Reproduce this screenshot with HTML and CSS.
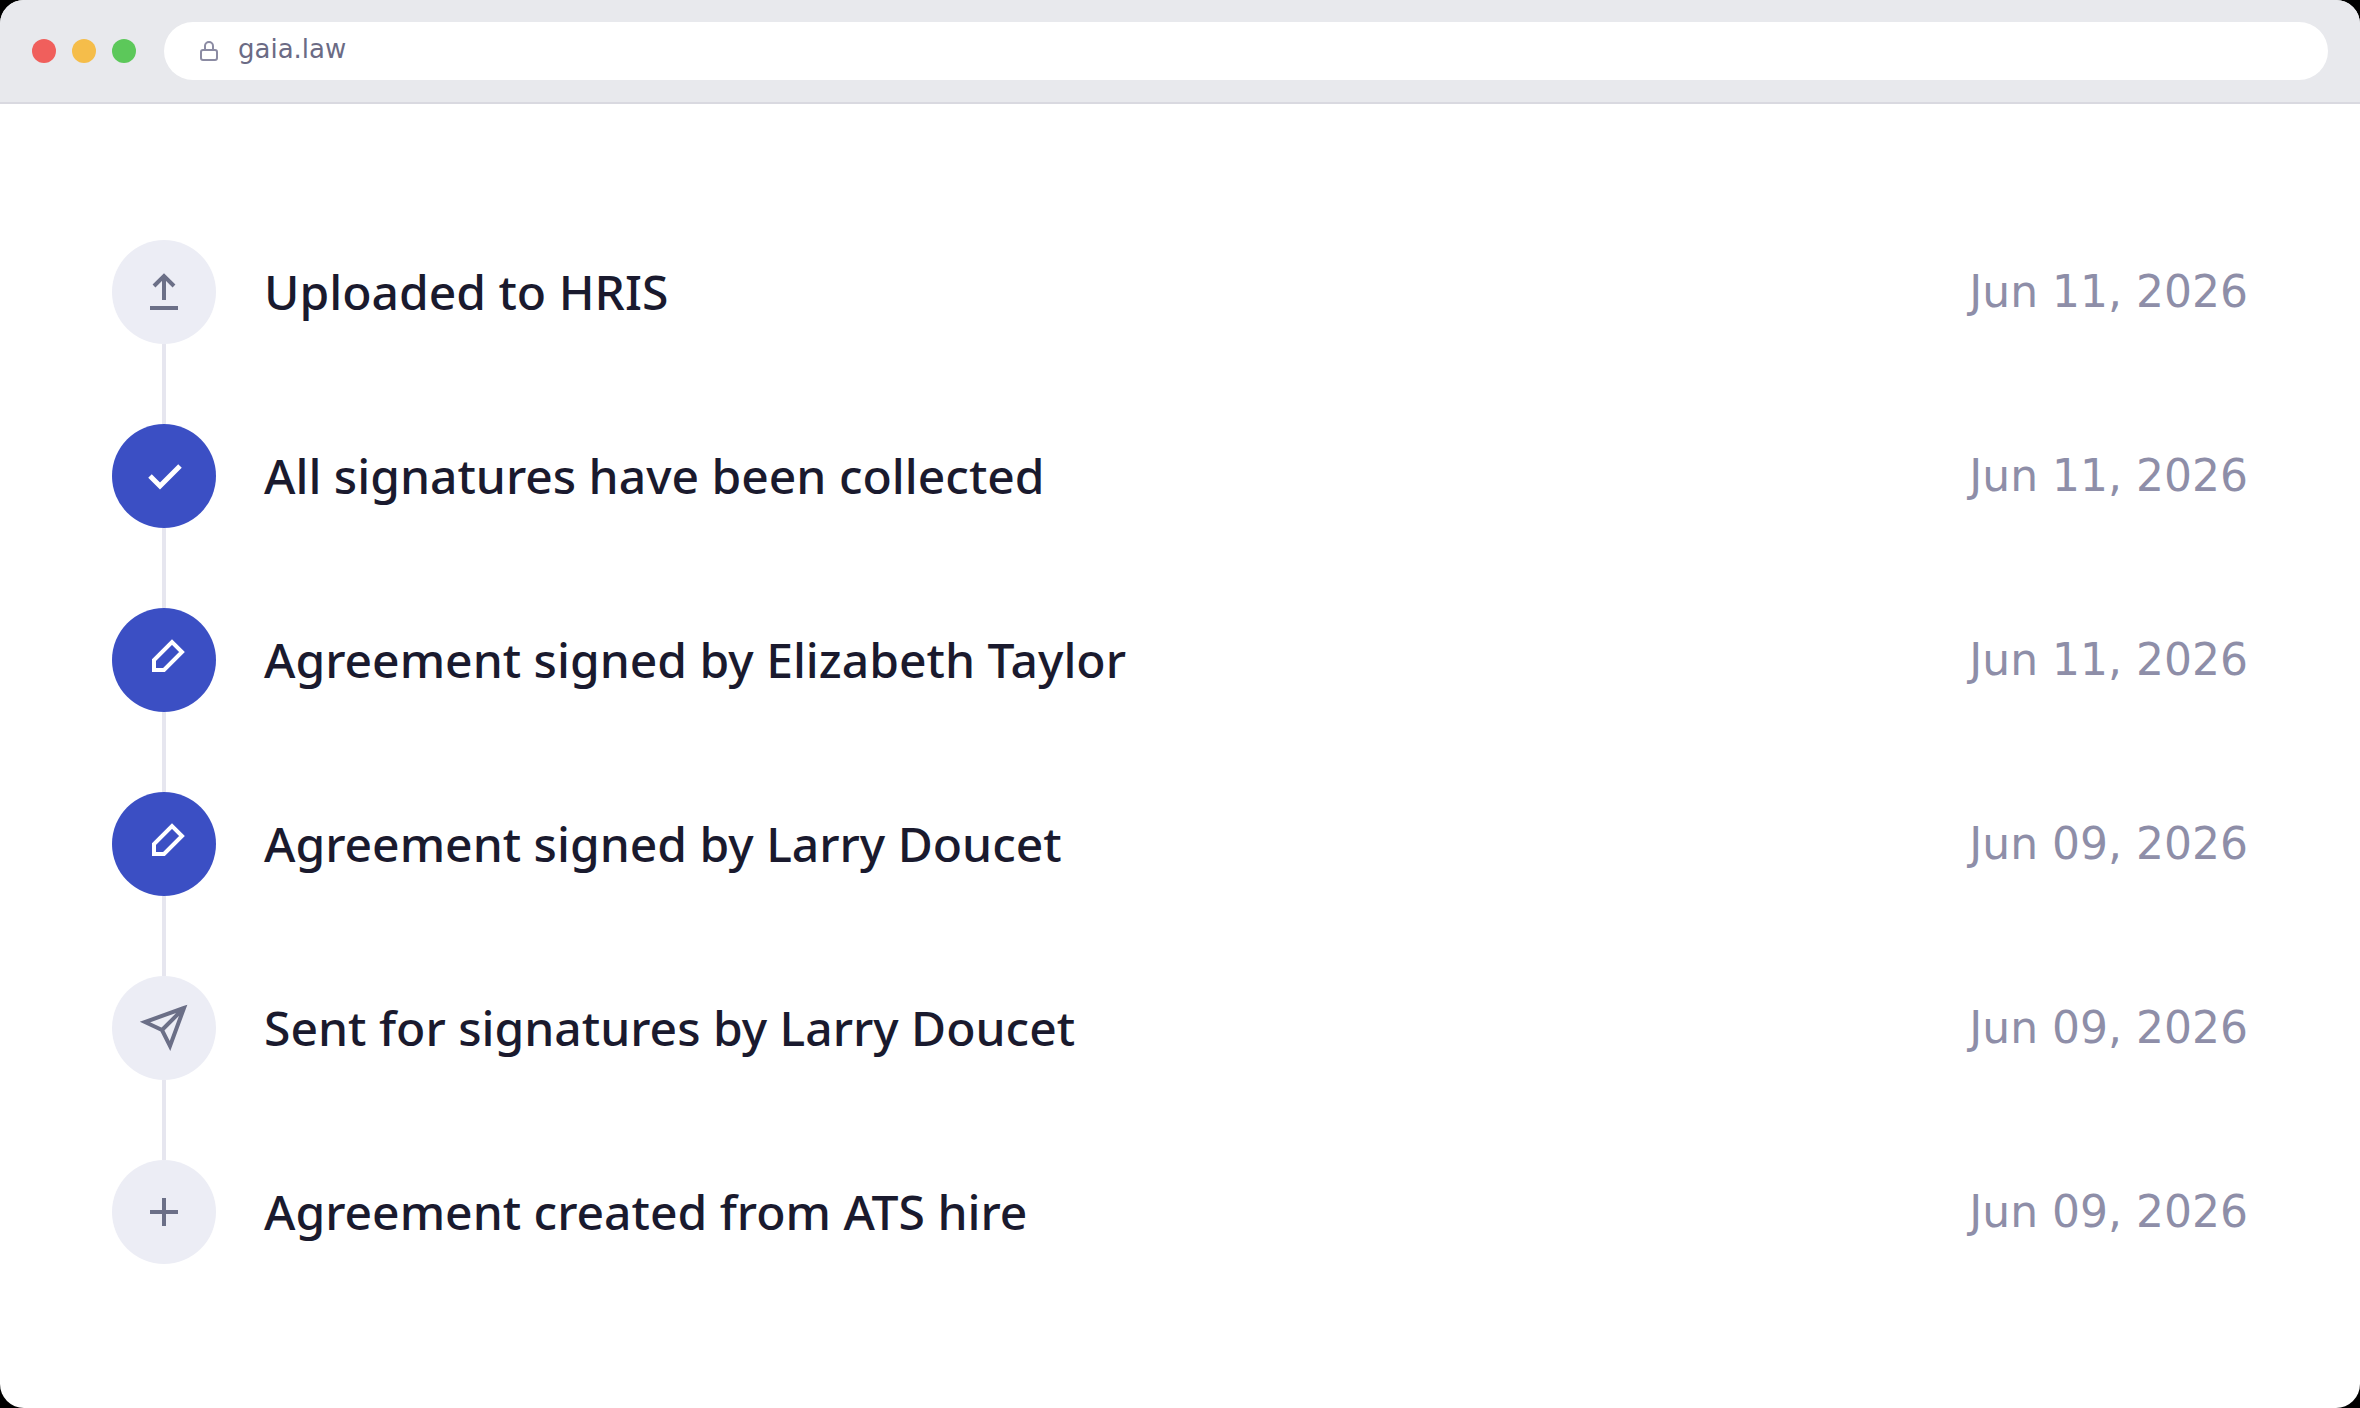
FILE: index.html
```html
<!DOCTYPE html>
<html lang="en">
<head>
  <meta charset="UTF-8">
  <meta name="viewport" content="width=device-width, initial-scale=1">
  <title>gaia.law</title>
  <link rel="stylesheet" href="styles.css">
</head>
<body>

  <div class="window">
    <header class="toolbar">
      <div class="dots">
        <span class="dot red"></span>
        <span class="dot yellow"></span>
        <span class="dot green"></span>
      </div>
      <div class="address">
        <svg class="lock" viewBox="0 0 20 22" aria-hidden="true">
          <rect x="3" y="10" width="16" height="10" rx="2"/>
          <path d="M7 10V6a4 4 0 0 1 8 0v4"/>
        </svg>
        <span>gaia.law</span>
      </div>
    </header>

    <main>
      <ol class="timeline">
        <li class="event">
          <span class="icon">
            <svg viewBox="0 0 104 104" aria-hidden="true">
              <path d="M52 60V36M42 46l10-10 10 10M38 68h28"/>
            </svg>
          </span>
          <span class="title">Uploaded to HRIS</span>
          <time class="date" datetime="2026-06-11">Jun 11, 2026</time>
        </li>
        <li class="event done">
          <span class="icon">
            <svg viewBox="0 0 104 104" aria-hidden="true">
              <path d="M38 52l10 10 20-20" stroke-width="5"/>
            </svg>
          </span>
          <span class="title">All signatures have been collected</span>
          <time class="date" datetime="2026-06-11">Jun 11, 2026</time>
        </li>
        <li class="event done">
          <span class="icon">
            <svg viewBox="0 0 104 104" aria-hidden="true">
              <path d="M42 62V52L60 34l10 10-18 18z"/>
            </svg>
          </span>
          <span class="title">Agreement signed by Elizabeth Taylor</span>
          <time class="date" datetime="2026-06-11">Jun 11, 2026</time>
        </li>
        <li class="event done">
          <span class="icon">
            <svg viewBox="0 0 104 104" aria-hidden="true">
              <path d="M42 62V52L60 34l10 10-18 18z"/>
            </svg>
          </span>
          <span class="title">Agreement signed by Larry Doucet</span>
          <time class="date" datetime="2026-06-09">Jun 09, 2026</time>
        </li>
        <li class="event">
          <span class="icon">
            <svg viewBox="0 0 104 104" aria-hidden="true">
              <path d="M72 32L33 46l17 8 8 16zM50 54l22-22"/>
            </svg>
          </span>
          <span class="title">Sent for signatures by Larry Doucet</span>
          <time class="date" datetime="2026-06-09">Jun 09, 2026</time>
        </li>
        <li class="event">
          <span class="icon">
            <svg viewBox="0 0 104 104" aria-hidden="true">
              <path d="M52 38v28M38 52h28"/>
            </svg>
          </span>
          <span class="title">Agreement created from ATS hire</span>
          <time class="date" datetime="2026-06-09">Jun 09, 2026</time>
        </li>
      </ol>
    </main>
  </div>

</body>
</html>
```

FILE: styles.css
```css
* {
  box-sizing: border-box;
}
body {
  margin: 0;
  background: #000;
  font-family: "DejaVu Sans", sans-serif;
}
.window {
  min-height: 100vh;
  border-radius: 24px;
  overflow: hidden;
  background: #fff;
}

/* browser bar */
.toolbar {
  display: flex;
  align-items: center;
  gap: 28px;
  padding: 22px 32px;
  background: #e8e9ed;
  border-bottom: 2px solid #d9d9e0;
}
.dots {
  display: flex;
  gap: 16px;
}
.dot {
  width: 24px;
  height: 24px;
  border-radius: 50%;
}
.red {
  background: #f05f5c;
}
.yellow {
  background: #f5bd4a;
}
.green {
  background: #5cc85a;
}
.address {
  flex: 1;
  display: flex;
  align-items: center;
  gap: 20px;
  height: 58px;
  padding: 0 34px;
  border-radius: 29px;
  background: #fff;
  color: #6b6b85;
  font-size: 26px;
  line-height: 30px;
}
.address span {
  padding-bottom: 4px;
}
.lock {
  width: 20px;
  height: 22px;
  fill: none;
  stroke: #8b8ba3;
  stroke-width: 2;
}

/* timeline */
main {
  padding: 136px 112px;
}
.timeline {
  display: grid;
  gap: 80px;
  margin: 0;
  padding: 0;
  list-style: none;
}
.event {
  position: relative;
  display: flex;
  align-items: center;
  gap: 48px;
}
/* line down to the next event */
.event:not(:last-child)::after {
  content: "";
  position: absolute;
  top: 100%;
  left: 50px;
  width: 4px;
  height: 80px;
  background: #e6e6ef;
}
.icon {
  width: 104px;
  height: 104px;
  border-radius: 50%;
  background: #ecedf5;
  color: #6b6f87;
}
.done .icon {
  background: #3b4fc4;
  color: #fff;
}
.icon svg {
  display: block;
  fill: none;
  stroke: currentColor;
  stroke-width: 4;
}
.title {
  flex: 1;
  color: #1a1a2e;
  font-family: "Noto Sans", sans-serif;
  font-size: 48px;
  font-weight: 500;
  line-height: 64px;
}
.date {
  color: #8e8ea8;
  font-size: 44px;
  line-height: 52px;
  white-space: nowrap;
}
```
